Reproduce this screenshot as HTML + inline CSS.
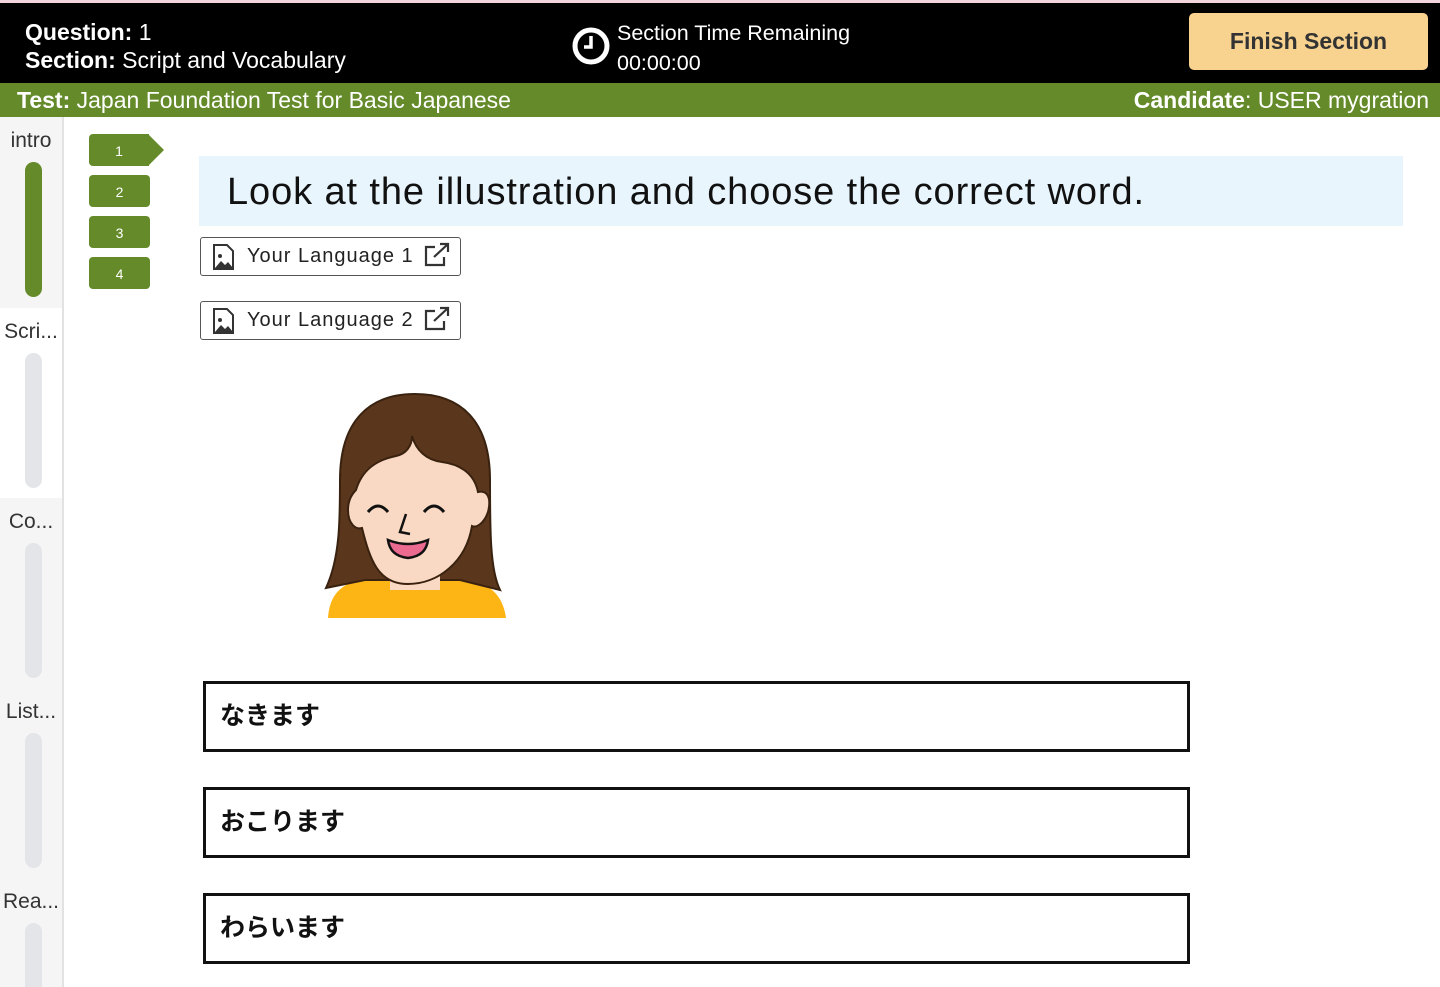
<!DOCTYPE html>
<html style="overflow:hidden;height:987px"><head><meta charset="utf-8"><style>
*{margin:0;padding:0;box-sizing:border-box}
body{width:1440px;height:987px;overflow:hidden;background:#fff;font-family:"Liberation Sans","Noto Sans CJK JP",sans-serif;position:relative}
.a{position:absolute}
#top{left:0;top:0;width:1440px;height:83px;background:#000;border-top:3px solid #f3d6dc;color:#fff}
#green{left:0;top:83px;width:1440px;height:34px;background:#648a2a;color:#fff;font-size:23px;line-height:34px}
.side{left:0;width:64px;border-right:2px solid #e2e2e2;background:#f5f5f5;color:#333;font-size:21px;text-align:center;overflow:hidden}
.side.w{background:#fff}
.side .t{margin-top:12px}
.pill{position:absolute;left:25px;width:17px;border-radius:9px;background:#e3e5e8}
.q{left:89px;width:61px;height:32px;background:#648a2a;border-radius:4px;color:#fff;font-size:14px;text-align:center;line-height:34px}
.lang{left:200px;width:261px;height:39px;border:1.5px solid #555;border-radius:3px;font-size:20px;color:#222;line-height:36px;padding-left:46px;letter-spacing:1px}
.opt{left:203px;width:987px;height:71px;border:3px solid #111;font-size:25px;font-weight:bold;line-height:64px;padding-left:14px;color:#111}
</style></head><body>
<div id="top" class="a">
 <div class="a" style="left:25px;top:15px;font-size:23px;line-height:28px">
  <b>Question:</b> 1<br><b>Section:</b> Script and Vocabulary</div>
 <svg class="a" style="left:571px;top:22px" width="40" height="42" viewBox="0 0 40 42"><circle cx="20" cy="21" r="16" fill="none" stroke="#fff" stroke-width="5"/><path d="M20 11v11h-7" stroke="#fff" stroke-width="3.5" fill="none"/></svg>
 <div class="a" style="left:617px;top:15px;font-size:21.5px;line-height:30px">Section Time Remaining<br>00:00:00</div>
 <div class="a" style="left:1189px;top:10px;width:239px;height:57px;background:#f7d38f;border-radius:5px;color:#333;font-size:23px;font-weight:bold;text-align:center;line-height:57px">Finish Section</div>
</div>
<div id="green" class="a"><span style="margin-left:17px"><b>Test:</b> Japan Foundation Test for Basic Japanese</span><span style="position:absolute;right:11px"><b>Candidate</b>: USER mygration</span></div>

<div class="a side" style="top:117px;height:191px"><div class="t">intro</div><div class="pill" style="top:45px;height:135px;background:#648a2a"></div></div>
<div class="a side w" style="top:308px;height:190px"><div class="t">Scri...</div><div class="pill" style="top:45px;height:135px"></div></div>
<div class="a side" style="top:498px;height:190px"><div class="t">Co...</div><div class="pill" style="top:45px;height:135px"></div></div>
<div class="a side" style="top:688px;height:190px"><div class="t">List...</div><div class="pill" style="top:45px;height:135px"></div></div>
<div class="a side" style="top:878px;height:109px"><div class="t">Rea...</div><div class="pill" style="top:45px;height:64px;border-radius:9px 9px 0 0"></div></div>

<div class="a q" style="top:134px;border-radius:4px 0 0 4px;width:60px">1</div>
<div class="a" style="left:148px;top:134px;width:0;height:0;border-top:16px solid transparent;border-bottom:16px solid transparent;border-left:16px solid #648a2a"></div>
<div class="a q" style="top:175px">2</div>
<div class="a q" style="top:216px">3</div>
<div class="a q" style="top:257px">4</div>

<div class="a" style="left:199px;top:156px;width:1204px;height:70px;background:#e8f5fd;font-size:38px;letter-spacing:0.9px;line-height:72px;padding-left:28px;color:#111;white-space:nowrap;overflow:hidden">Look at the illustration and choose the correct word.</div>

<div class="a lang" style="top:237px">Your Language 1</div>
<div class="a lang" style="top:301px">Your Language 2</div>
<svg class="a" style="left:211px;top:243px" width="26" height="28" viewBox="0 0 26 28"><path d="M3 2h13l6 6v18H3z" fill="#fff" stroke="#333" stroke-width="2"/><circle cx="9" cy="13" r="2" fill="#333"/><path d="M4 25l6-7 4 4 3-3 5 6z" fill="#333"/></svg>
<svg class="a" style="left:211px;top:307px" width="26" height="28" viewBox="0 0 26 28"><path d="M3 2h13l6 6v18H3z" fill="#fff" stroke="#333" stroke-width="2"/><circle cx="9" cy="13" r="2" fill="#333"/><path d="M4 25l6-7 4 4 3-3 5 6z" fill="#333"/></svg>
<svg class="a" style="left:423px;top:242px" width="28" height="26" viewBox="0 0 28 26"><path d="M12 5H3v18h18v-8" fill="none" stroke="#333" stroke-width="2.2"/><path d="M11 15L25 2M17 2h8v8" fill="none" stroke="#333" stroke-width="2.2"/></svg>
<svg class="a" style="left:423px;top:306px" width="28" height="26" viewBox="0 0 28 26"><path d="M12 5H3v18h18v-8" fill="none" stroke="#333" stroke-width="2.2"/><path d="M11 15L25 2M17 2h8v8" fill="none" stroke="#333" stroke-width="2.2"/></svg>

<svg class="a" style="left:320px;top:390px" width="190" height="232" viewBox="0 0 190 232">
 <path d="M8 228c2-30 20-40 60-42h56c40 2 58 14 62 42z" fill="#fdb515"/>
 <path d="M20 90C20 30 50 4 95 4s75 26 75 86c0 50 0 90 10 110l-40-10H45L6 198c14-30 14-68 14-108z" fill="#5a361c" stroke="#3a2210" stroke-width="2"/>
 <rect x="70" y="160" width="50" height="40" fill="#f9d9c3"/>
 <path d="M36 100c6-20 20-30 40-34 10-2 16-10 16-20 4 14 14 24 30 26 16 2 32 10 36 30 8-2 14 4 10 20-4 12-12 16-16 14-6 36-34 58-64 58S50 170 42 138c-6 2-14-4-14-18 0-10 4-16 8-20z" fill="#f9d9c3" stroke="#3a2210" stroke-width="2"/>
 <path d="M48 122q10-12 20 0M104 122q10-12 20 0" fill="none" stroke="#111" stroke-width="3"/>
 <path d="M86 124l-6 18 10 2" fill="none" stroke="#111" stroke-width="2.5"/>
 <path d="M68 150q20 8 40 0q-2 16-20 18q-18-2-20-18z" fill="#ea6a90" stroke="#111" stroke-width="2.5"/>
</svg>

<div class="a opt" style="top:681px">なきます</div>
<div class="a opt" style="top:787px">おこります</div>
<div class="a opt" style="top:893px">わらいます</div>
</body></html>
